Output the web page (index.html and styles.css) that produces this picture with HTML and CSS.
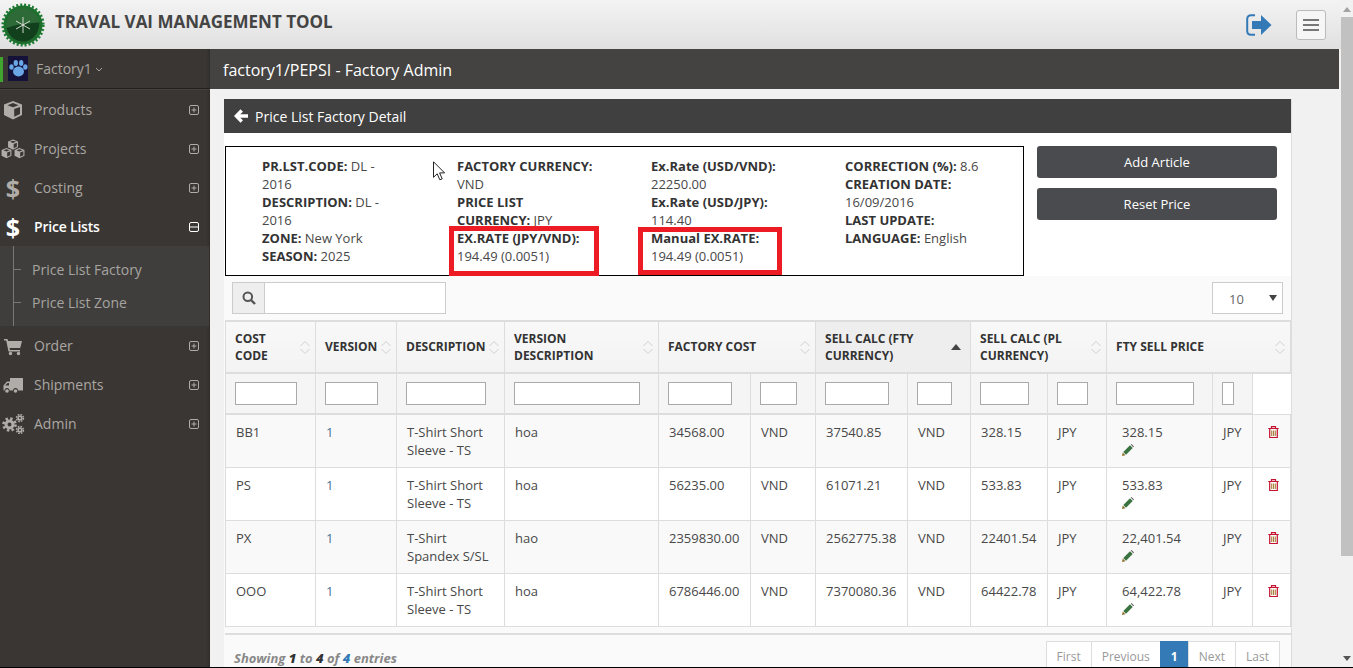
FILE: index.html
```html
<!DOCTYPE html>
<html lang="en">
<head>
<meta charset="utf-8">
<title>Price List Factory Detail</title>
<link rel="stylesheet" href="styles.css">
</head>
<body>
<svg class="defs" width="0" height="0" aria-hidden="true">
  <defs>
    <symbol id="plus" viewBox="0 0 10 10"><rect x=".5" y=".5" width="9" height="9" rx="1.5" fill="none" stroke="currentColor"/><path d="M2.5 5h5M5 2.5v5" stroke="currentColor"/></symbol>
    <symbol id="minus" viewBox="0 0 10 10"><rect x=".5" y=".5" width="9" height="9" rx="1.5" fill="none" stroke="currentColor"/><path d="M1 5h8" stroke="currentColor"/></symbol>
    <symbol id="cube" viewBox="0 0 20 20"><path d="M10 1l9 3.5v10.6L10 19.6 1 15.100V4.500z" fill="currentColor"/><path d="M10 3.100L15.600 5.200 10 7.300 4.400 5.200zM11.200 9.100l5.800-2.200v7l-5.800 2.900z" fill="#3a3633"/></symbol>
    <symbol id="sort" viewBox="0 0 12 17"><path d="M1.500 7L6 2.500 10.500 7M1.500 10L6 14.500 10.500 10" fill="none" stroke="#d0d0d0"/></symbol>
    <symbol id="trash" viewBox="0 0 11 12"><path d="M.3 2.500h10.400M3.500 2.500V.7h4v1.800M1.700 2.500v9h7.600v-9" fill="none" stroke="#c4122f" stroke-width="1.200"/><path d="M3.700 4.500v5.500M5.500 4.500v5.500M7.300 4.500v5.500" stroke="#a8803c" stroke-width="1.100"/></symbol>
    <symbol id="pencil" viewBox="0 0 12 12"><path d="M0 12l.8-3.400 2.600 2.600z" fill="#8a6a2a"/><path d="M1.300 8L8 1.300l2.700 2.700L4 10.700z" fill="#3a7340"/><path d="M8.800.6l.7-.6 2.500 2.500-.8.800z" fill="#555"/></symbol>
  </defs>
</svg>
<div class="frame">
  <div class="page">
    <header class="topbar">
      <div class="brand">
        <svg class="logo" viewBox="0 0 44 44" aria-hidden="true">
          <circle cx="22" cy="22" r="20.300" fill="none" stroke="#1c7a30" stroke-width="2.600" stroke-dasharray="2 2.010"/>
          <circle cx="22" cy="22" r="19.500" fill="#1c6f2c"/>
          <circle cx="22" cy="22" r="16.500" fill="#2d6a38"/>
          <path d="M5.600 25c7-3 22-5 32.800-5.500C38.500 31 31 38.500 22 38.500 14 38.500 7.500 33 5.600 25z" fill="#123f1c"/>
          <path d="M22 14v16M15 18l14 8M29 18l-14 8" stroke="#e8e8e0" stroke-width=".9"/>
        </svg>
        <h1 class="brand-name">TRAVAL VAI MANAGEMENT TOOL</h1>
      </div>
      <div class="top-actions">
        <svg class="signout" viewBox="0 0 26 22" aria-hidden="true">
          <path d="M9 1.200H5C2.800 1.200 1.200 2.800 1.200 5v12c0 2.200 1.600 3.800 3.800 3.800h4" fill="none" stroke="#337ab7" stroke-width="2"/>
          <path d="M6 7h9V1l10.500 10L15 21v-6H6z" fill="#337ab7"/>
        </svg>
        <button class="burger" type="button" aria-label="Menu"><span></span><span></span><span></span></button>
      </div>
    </header>
    <div class="body-row">
      <aside class="sidebar">
        <div class="profile">
          <span class="profile-mark"></span>
          <svg class="paw" viewBox="0 0 20 25" aria-hidden="true">
            <rect width="20" height="25" fill="#15123a"/>
            <g fill="#6aa5e6"><ellipse cx="10.500" cy="15.500" rx="5.500" ry="5"/><ellipse cx="3.500" cy="11" rx="2.200" ry="2.800"/><ellipse cx="7.800" cy="7" rx="2.200" ry="3"/><ellipse cx="13.200" cy="7" rx="2.200" ry="3"/><ellipse cx="17.300" cy="11" rx="2.200" ry="2.800"/></g>
          </svg>
          <span class="profile-name">Factory1</span>
          <svg class="caret" viewBox="0 0 8 5" aria-hidden="true"><path d="M1 1l3 3 3-3" fill="none" stroke="currentColor"/></svg>
        </div>
        <nav class="menu">
          <a class="menu-item">
            <span class="menu-icon"><svg class="ic" viewBox="0 0 20 20"><use href="#cube"/></svg></span><span class="menu-label">Products</span><svg class="tog"><use href="#plus"/></svg>
          </a>
          <a class="menu-item">
            <span class="menu-icon"><svg class="ic ic-wide" viewBox="0 0 24 20"><use href="#cube" x="6.500" y="0" width="11" height="11"/><use href="#cube" x="0" y="8.500" width="11" height="11"/><use href="#cube" x="13" y="8.500" width="11" height="11"/></svg></span><span class="menu-label">Projects</span><svg class="tog"><use href="#plus"/></svg>
          </a>
          <a class="menu-item">
            <span class="menu-icon menu-dollar">$</span><span class="menu-label">Costing</span><svg class="tog"><use href="#plus"/></svg>
          </a>
          <a class="menu-item is-open">
            <span class="menu-icon menu-dollar">$</span><span class="menu-label">Price Lists</span><svg class="tog"><use href="#minus"/></svg>
          </a>
          <div class="submenu">
            <a class="sub-item">Price List Factory</a>
            <a class="sub-item">Price List Zone</a>
          </div>
          <a class="menu-item">
            <span class="menu-icon"><svg class="ic" viewBox="0 0 20 20"><path d="M1 3h3.500l.6 2H19l-1.800 7H6.500l.4 2H17v1.500H5.500L3.200 4.500H1z" fill="currentColor"/><circle cx="7.500" cy="17.500" r="1.700" fill="currentColor"/><circle cx="15.500" cy="17.500" r="1.700" fill="currentColor"/></svg></span><span class="menu-label">Order</span><svg class="tog"><use href="#plus"/></svg>
          </a>
          <a class="menu-item">
            <span class="menu-icon"><svg class="ic" viewBox="0 0 20 20"><path d="M7 3h13v12.500h-5a2.500 2.500 0 0 0-5 0H6.500a2.500 2.500 0 0 0-5 0H.5v-5L4 6.500h3zM2.200 10.500H6V8H4.500z" fill="currentColor" fill-rule="evenodd"/><circle cx="4" cy="16" r="1.800" fill="currentColor"/><circle cx="12.500" cy="16" r="1.800" fill="currentColor"/></svg></span><span class="menu-label">Shipments</span><svg class="tog"><use href="#plus"/></svg>
          </a>
          <a class="menu-item">
            <span class="menu-icon"><svg class="ic ic-wide" viewBox="0 0 24 20"><g fill="none" stroke="currentColor"><circle cx="8.500" cy="10.500" r="3.500" stroke-width="3"/><circle cx="8.500" cy="10.500" r="6" stroke-width="2.600" stroke-dasharray="2.400 2.310"/><circle cx="19" cy="4" r="1.800" stroke-width="1.600"/><circle cx="19" cy="4" r="3.400" stroke-width="1.600" stroke-dasharray="1.600 1.070"/><circle cx="19" cy="16" r="1.800" stroke-width="1.600"/><circle cx="19" cy="16" r="3.400" stroke-width="1.600" stroke-dasharray="1.600 1.070"/></g></svg></span><span class="menu-label">Admin</span><svg class="tog"><use href="#plus"/></svg>
          </a>
        </nav>
      </aside>
      <main class="main">
        <div class="titlebar">factory1/PEPSI - Factory Admin</div>
        <section class="panel">
          <div class="panel-head">
            <svg class="back" viewBox="0 0 14 14" aria-hidden="true"><path d="M6.500.2L9 2.700 6.200 5.300H14v3.400H6.200L9 11.300l-2.500 2.500L0 7z" fill="#fff"/></svg>
            <span>Price List Factory Detail</span>
          </div>
          <div class="summary">
            <div class="infobox">
              <div class="info-col">
                <b>PR.LST.CODE:</b> DL - 2016<br>
                <b>DESCRIPTION:</b> DL - 2016<br>
                <b>ZONE:</b> New York<br>
                <b>SEASON:</b> 2025
              </div>
              <div class="info-col">
                <b>FACTORY CURRENCY:</b> VND<br>
                <b>PRICE LIST CURRENCY:</b> JPY<br>
                <b>EX.RATE (JPY/VND):</b> 194.49 (0.0051)
              </div>
              <div class="info-col">
                <b>Ex.Rate (USD/VND):</b> 22250.00<br>
                <b>Ex.Rate (USD/JPY):</b> 114.40<br>
                <b>Manual EX.RATE:</b> 194.49 (0.0051)
              </div>
              <div class="info-col">
                <b>CORRECTION (%):</b> 8.6<br>
                <b>CREATION DATE:</b> 16/09/2016<br>
                <b>LAST UPDATE:</b><br>
                <b>LANGUAGE:</b> English
              </div>
              <span class="redbox redbox-a"></span>
              <span class="redbox redbox-b"></span>
              <svg class="cursor" viewBox="0 0 13 20" aria-hidden="true"><path d="M.5.800v15.500l3.700-3.500 2.600 6 2.400-1-2.600-5.900h5z" fill="#fff" stroke="#222"/></svg>
            </div>
            <div class="actions">
              <button class="btn" type="button">Add Article</button>
              <button class="btn" type="button">Reset Price</button>
            </div>
          </div>
          <div class="toolbar">
            <div class="search">
              <span class="search-addon"><svg viewBox="0 0 14 14" width="14" height="14" aria-hidden="true"><circle cx="5.800" cy="5.800" r="4.300" fill="none" stroke="#555" stroke-width="2"/><path d="M9 9l4 4" stroke="#555" stroke-width="2.400"/></svg></span>
              <input class="search-input" type="text">
            </div>
            <div class="length">10<span class="length-arrow"></span></div>
          </div>
          <table class="grid">
            <colgroup>
              <col class="w90"><col class="w81"><col class="w108"><col class="w154"><col class="w92"><col class="w65"><col class="w92"><col class="w63"><col class="w77"><col class="w59"><col class="w106"><col class="w40"><col class="w38">
            </colgroup>
            <thead>
              <tr class="head-row">
                <th><div class="th"><span>COST<br>CODE</span><svg class="sort"><use href="#sort"/></svg></div></th>
                <th><div class="th"><span class="one">VERSION</span><svg class="sort"><use href="#sort"/></svg></div></th>
                <th><div class="th"><span class="one">DESCRIPTION</span><svg class="sort"><use href="#sort"/></svg></div></th>
                <th><div class="th"><span>VERSION<br>DESCRIPTION</span><svg class="sort"><use href="#sort"/></svg></div></th>
                <th colspan="2"><div class="th"><span class="one">FACTORY COST</span><svg class="sort"><use href="#sort"/></svg></div></th>
                <th colspan="2" class="sorted"><div class="th"><span>SELL CALC (FTY<br>CURRENCY)</span><svg class="sort-up" viewBox="0 0 10 6"><path d="M5 0l5 6H0z" fill="#444"/></svg></div></th>
                <th colspan="2"><div class="th"><span>SELL CALC (PL<br>CURRENCY)</span><svg class="sort"><use href="#sort"/></svg></div></th>
                <th colspan="3"><div class="th"><span class="one">FTY SELL PRICE</span><svg class="sort"><use href="#sort"/></svg></div></th>
              </tr>
              <tr class="filter-row">
                <td><input type="text"></td><td><input type="text"></td><td><input type="text"></td><td><input type="text"></td><td><input type="text"></td><td><input type="text"></td><td><input type="text"></td><td><input type="text"></td><td><input type="text"></td><td><input type="text"></td><td><input type="text"></td><td><input type="text"></td><td class="filter-empty"></td>
              </tr>
            </thead>
            <tbody>
              <tr>
                <td>BB1</td><td class="link">1</td><td>T-Shirt Short Sleeve - TS</td><td>hoa</td><td>34568.00</td><td>VND</td><td>37540.85</td><td>VND</td><td>328.15</td><td>JPY</td>
                <td class="price">328.15<br><svg class="pen"><use href="#pencil"/></svg></td><td>JPY</td><td><svg class="bin"><use href="#trash"/></svg></td>
              </tr>
              <tr>
                <td>PS</td><td class="link">1</td><td>T-Shirt Short Sleeve - TS</td><td>hoa</td><td>56235.00</td><td>VND</td><td>61071.21</td><td>VND</td><td>533.83</td><td>JPY</td>
                <td class="price">533.83<br><svg class="pen"><use href="#pencil"/></svg></td><td>JPY</td><td><svg class="bin"><use href="#trash"/></svg></td>
              </tr>
              <tr>
                <td>PX</td><td class="link">1</td><td>T-Shirt Spandex S/SL</td><td>hao</td><td>2359830.00</td><td>VND</td><td>2562775.38</td><td>VND</td><td>22401.54</td><td>JPY</td>
                <td class="price">22,401.54<br><svg class="pen"><use href="#pencil"/></svg></td><td>JPY</td><td><svg class="bin"><use href="#trash"/></svg></td>
              </tr>
              <tr>
                <td>OOO</td><td class="link">1</td><td>T-Shirt Short Sleeve - TS</td><td>hoa</td><td>6786446.00</td><td>VND</td><td>7370080.36</td><td>VND</td><td>64422.78</td><td>JPY</td>
                <td class="price">64,422.78<br><svg class="pen"><use href="#pencil"/></svg></td><td>JPY</td><td><svg class="bin"><use href="#trash"/></svg></td>
              </tr>
            </tbody>
          </table>
          <div class="table-foot">
            <div class="showing">Showing <b class="dark">1</b> to <b class="dark">4</b> of <b class="blue">4</b> entries</div>
            <div class="pager">
              <a>First</a><a>Previous</a><a class="current">1</a><a>Next</a><a>Last</a>
            </div>
          </div>
        </section>
      </main>
    </div>
  </div>
  <div class="scrollbar">
    <span class="sb-up"></span>
    <span class="sb-thumb"></span>
    <span class="sb-down"></span>
  </div>
</div>
</body>
</html>
```

FILE: styles.css
```css
* { box-sizing: border-box; }
html, body { margin: 0; padding: 0; height: 100%; overflow: hidden; }
body { font-family: "Open Sans", "Liberation Sans", sans-serif; font-size: 13px; line-height: 18px; color: #484848; background: #000; }
.defs { position: absolute; }
.frame { display: flex; height: 667px; overflow: hidden; background: #f1f1f1; }
.page { width: 1341px; flex: none; display: flex; flex-direction: column; }

.topbar { height: 49px; flex: none; display: flex; justify-content: space-between; align-items: center; background: linear-gradient(#f3f3f3, #e0e0e0); padding-right: 15px; }
.brand { display: flex; align-items: center; }
.logo { width: 44px; height: 44px; margin-left: 1px; }
.brand-name { margin: -6px 0 0 10px; font-size: 17px; line-height: 22px; font-weight: 700; color: #444; }
.top-actions { display: flex; align-items: center; }
.signout { width: 26px; height: 22px; margin-right: 24px; }
.burger { width: 30px; height: 30px; padding: 0; border: 1px solid #bbb; border-radius: 3px; background: #f6f6f6; display: flex; flex-direction: column; align-items: center; justify-content: center; gap: 3px; margin-top: 1px; }
.burger span { width: 16px; height: 2px; background: #777; }

.body-row { flex: 1; display: flex; min-height: 0; }
.sidebar { width: 210px; flex: none; background: #3a3633; color: #aaa7a3; box-shadow: inset -3px 0 3px -2px #2c2927; }
.profile { height: 40px; display: flex; align-items: center; position: relative; border-bottom: 1px solid #232120; box-shadow: 0 1px 0 #45413e; padding-left: 8px; font-size: 14px; }
.profile-mark { position: absolute; left: 0; top: 8px; width: 3px; height: 25px; background: #3fa52e; }
.paw { width: 20px; height: 25px; margin-top: -1px; }
.profile-name { margin-left: 8px; color: #a8a5a1; }
.caret { width: 8px; height: 5px; margin-left: 3px; margin-top: 2px; color: #a8a5a1; }

.menu { display: block; padding-top: 1px; }
.menu-item { height: 39px; display: flex; align-items: center; font-size: 14px; padding-right: 11px; }
.menu-icon { width: 34px; flex: none; display: flex; justify-content: center; color: #b0ada9; padding-right: 8px; }
.ic { width: 20px; height: 20px; }
.ic-wide { width: 24px; height: 20px; }
.menu-dollar { font-size: 25px; font-weight: 700; line-height: 22px; }
.menu-label { flex: 1; color: #aaa7a3; }
.tog { width: 10px; height: 10px; color: #b0ada9; }
.is-open .menu-label { color: #fff; font-weight: 600; letter-spacing: -.2px; }
.is-open .menu-dollar, .is-open .tog { color: #fff; }

.submenu { margin-right: 1px; padding: 7px 0 7px 32px; background: linear-gradient(90deg, transparent 13px, #7a7875 13px, #7a7875 14px, transparent 14px), #3f3e3c; position: relative; }
.sub-item { display: block; height: 33px; line-height: 33px; font-size: 14px; color: #a6a4a0; position: relative; }
.sub-item::before { content: ""; position: absolute; left: -18px; top: 16px; width: 7px; height: 1px; background: #7a7875; }

.main { flex: 1; min-width: 0; padding-right: 2px; background: #f1f1f1; }
.titlebar { height: 40px; line-height: 42px; padding-left: 13px; background: #444341; color: #fff; font-size: 16px; }
.panel { margin: 10px 47px 0 14px; background: #fafafa; border-right: 1px solid #ddd; }
.panel-head { height: 34px; display: flex; align-items: center; background: #404040; color: #fff; font-size: 14px; padding: 2px 0 0 10px; }
.back { width: 14px; height: 14px; margin: -2px 7px 0 0; }

.summary { display: flex; height: 143px; background: #fff; padding: 13px 0 0 1px; }
.infobox { width: 799px; height: 130px; border: 1px solid #000; display: grid; grid-template-columns: 195px 194px 194px 194px; padding: 10px 0 0 36px; position: relative; }
.info-col { padding-right: 54px; }
.info-col:first-child { padding-right: 55px; }
.info-col b { color: #333; font-weight: 700; }
.redbox { position: absolute; border: 5px solid #ed1c24; }
.redbox-a { left: 223px; top: 79px; width: 150px; height: 50px; }
.redbox-b { left: 412px; top: 80px; width: 144px; height: 48px; }
.cursor { position: absolute; left: 207px; top: 14px; width: 13px; height: 20px; }
.actions { margin-left: 13px; width: 240px; display: flex; flex-direction: column; gap: 10px; }
.btn { height: 32px; padding: 0; border: 0; border-radius: 3px; background: #4a4b4e; color: #fff; font: 500 13px/18px "Open Sans", sans-serif; }

.toolbar { display: flex; justify-content: space-between; height: 44px; padding: 6px 8px 0 8px; }
.search { display: flex; width: 214px; height: 32px; border: 1px solid #ccc; }
.search-addon { width: 32px; flex: none; background: #eee; border-right: 1px solid #ccc; display: flex; align-items: center; justify-content: center; }
.search-input { flex: 1; min-width: 0; border: 0; background: #fff; }
.length { width: 71px; height: 32px; border: 1px solid #ccc; background: #fff; padding: 7px 0 0 16px; color: #666; position: relative; }
.length-arrow { position: absolute; right: 5px; top: 12px; border: 4px solid transparent; border-top: 6px solid #444; border-bottom: 0; }

.grid { margin-left: 1px; width: 1065px; table-layout: fixed; border-collapse: collapse; border-top: 2px solid #ddd; background: #fff; }
.w90 { width: 90px; } .w81 { width: 81px; } .w108 { width: 108px; } .w154 { width: 154px; } .w92 { width: 92px; } .w65 { width: 65px; } .w63 { width: 63px; } .w77 { width: 77px; } .w59 { width: 59px; } .w106 { width: 106px; } .w40 { width: 40px; } .w38 { width: 38px; }
.grid th, .grid td { border: 1px solid #ddd; }
.head-row { height: 52px; }
.grid th { padding: 0 4px 0 9px; text-align: left; font-size: 12px; line-height: 17px; font-weight: 700; color: #333; background: linear-gradient(#f8f8f8, #f3f3f3); border-bottom-width: 2px; }
.grid th.sorted { background: #eee; }
.th { display: flex; justify-content: space-between; align-items: center; }
.one { margin-top: -2px; }
.sort { width: 12px; height: 17px; flex: none; }
.sort-up { width: 10px; height: 6px; flex: none; margin-right: 5px; }
.filter-row td { height: 41px; padding: 0 18px 0 9px; background: #f5f5f5; border-bottom-width: 2px; }
.filter-row input { display: block; width: 100%; height: 23px; padding: 0; border: 1px solid #aaa; background: #fff; }
.filter-row td.filter-empty { background: #fff; border-top: 0; border-right: hidden; border-bottom-width: 1px; }
.grid tbody td { padding: 8px 10px; vertical-align: top; height: 53px; color: #484848; }
.grid tbody tr:nth-child(odd) td { background: #f9f9f9; }
.grid tbody td.link { color: #4b7393; }
.grid tbody td.price { padding-left: 15px; }
.pen { width: 12px; height: 12px; vertical-align: -1px; display: inline-block; }
.bin { width: 11px; height: 12px; margin-left: 5px; display: block; margin-top: 3px; }

.table-foot { display: flex; justify-content: space-between; margin: 6px 0 0 1px; border-top: 2px solid #ddd; padding: 6px 11px 0 9px; }
.showing { padding-top: 8px; font-size: 13px; font-style: italic; font-weight: 700; color: #888; }
.showing .dark { color: #333; }
.showing .blue { color: #337ab7; }
.pager { display: flex; font-size: 12px; color: #999; }
.pager a { padding: 6px 10px; border: 1px solid #ddd; margin-left: -1px; background: #fff; height: 34px; }
.pager a.current { background: #337ab7; border-color: #337ab7; color: #fff; font-weight: 700; }

.scrollbar { width: 12px; flex: none; background: #f1f1f1; display: flex; flex-direction: column; align-items: center; position: relative; }
.sb-up { margin-top: 7px; border: 4px solid transparent; border-top: 0; border-bottom: 5px solid #a3a3a3; width: 0; height: 0; margin-bottom: 5px; }
.sb-thumb { width: 12px; height: 539px; background: #c1c1c1; }
.sb-down { position: absolute; bottom: 6px; left: 2px; border: 4px solid transparent; border-bottom: 0; border-top: 5px solid #555; }
```
